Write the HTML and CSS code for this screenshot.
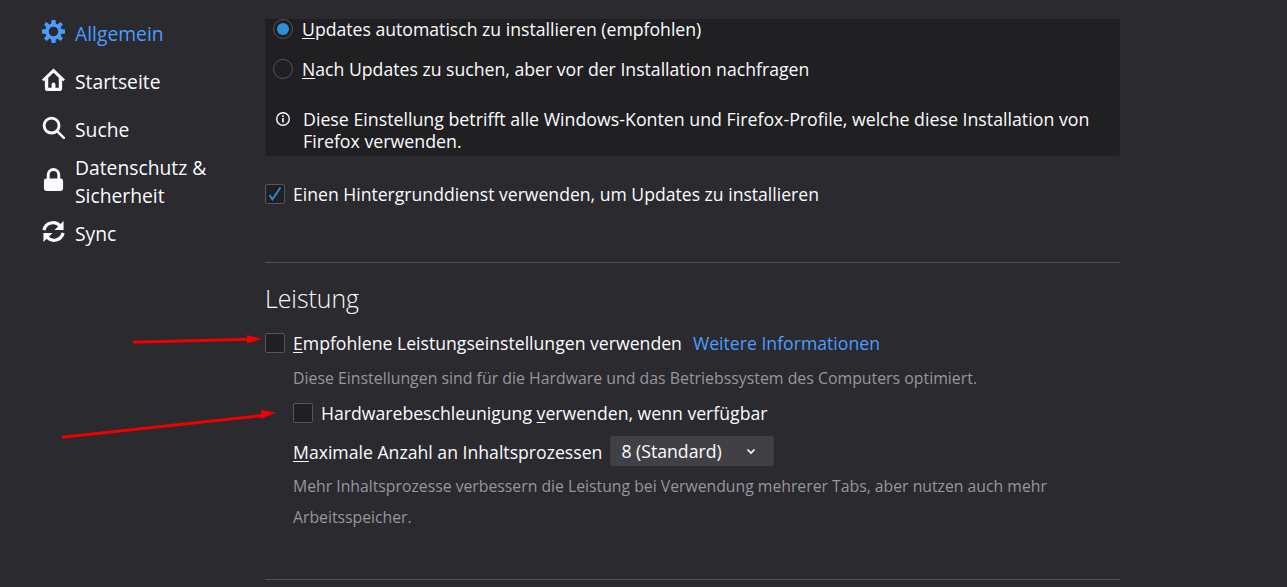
FILE: index.html
```html
<!DOCTYPE html>
<html lang="de">
<head>
<meta charset="utf-8">
<title>Einstellungen</title>
<link rel="stylesheet" href="styles.css">
</head>
<body>
<nav class="sidebar">
  <a class="nav-item active">
    <svg class="nav-icon" viewBox="0 0 24 24"><path fill="currentColor" fill-rule="evenodd" d="M10 0h4l.6 4 1.500.6L19.400 2.200l2.400 2.400-2.400 3.300.6 1.500 4 .6v4l-4 .6-.6 1.500 2.400 3.300-2.400 2.400-3.300-2.400-1.500.6-.6 4h-4l-.6-4-1.500-.6-3.300 2.400-2.400-2.400 2.400-3.300-.6-1.500-4-.6v-4l4-.6.6-1.500-2.400-3.300 2.400-2.400 3.300 2.400 1.500-.6zM12 7a5 5 0 1 0 0 10 5 5 0 0 0 0-10z"/></svg>
    <span>Allgemein</span>
  </a>
  <a class="nav-item">
    <svg class="nav-icon" viewBox="0 0 24 24"><path fill="currentColor" fill-rule="evenodd" d="M12 0.500 24 12l-1.800 1.900-1.200-1.100V21a3 3 0 0 1-3 3H6a3 3 0 0 1-3-3v-8.200l-1.200 1.100L0 12zM12 5 6.500 10.300V20.500H10V17a2 2 0 0 1 4 0v3.500H17.500V10.300z"/></svg>
    <span>Startseite</span>
  </a>
  <a class="nav-item">
    <svg class="nav-icon" viewBox="0 0 24 24"><circle cx="10" cy="10" r="7.800" fill="none" stroke="currentColor" stroke-width="3"/><path d="M15.500 15.500 22.800 22.800" stroke="currentColor" stroke-width="2.600" stroke-linecap="round"/></svg>
    <span>Suche</span>
  </a>
  <a class="nav-item two-line">
    <svg class="nav-icon" viewBox="0 0 24 24"><path fill="currentColor" fill-rule="evenodd" d="M12 0a7 7 0 0 1 7 7v4h.5A2.500 2.500 0 0 1 22 13.500v8a2.500 2.500 0 0 1-2.500 2.500h-15A2.500 2.500 0 0 1 2 21.500v-8A2.500 2.500 0 0 1 4.500 11H5V7a7 7 0 0 1 7-7zm0 3a4 4 0 0 0-4 4v4h8V7a4 4 0 0 0-4-4z"/></svg>
    <span>Datenschutz &amp; Sicherheit</span>
  </a>
  <a class="nav-item">
    <svg class="nav-icon" viewBox="0 0 24 24"><path fill="none" stroke="currentColor" stroke-width="3.400" d="M2 10.500A9.700 9.700 0 0 1 19 6.500M22 13.500A9.700 9.700 0 0 1 5 17.500"/><path fill="currentColor" d="M22.500 1v9.500h-9.500zM1.500 23v-9.500h9.500z"/></svg>
    <span>Sync</span>
  </a>
</nav>

<main class="content">
  <section class="update-box">
    <label class="radio-row first">
      <span class="radio checked"></span>
      <span><u>U</u>pdates automatisch zu installieren (empfohlen)</span>
    </label>
    <label class="radio-row">
      <span class="radio"></span>
      <span><u>N</u>ach Updates zu suchen, aber vor der Installation nachfragen</span>
    </label>
    <div class="notice">
      <svg class="info-icon" viewBox="0 0 16 16"><circle cx="8" cy="8" r="6.300" fill="none" stroke="currentColor" stroke-width="1.400"/><rect x="7.200" y="7" width="1.600" height="4.500" fill="currentColor"/><rect x="7.200" y="4.300" width="1.600" height="1.700" fill="currentColor"/></svg>
      <p>Diese Einstellung betrifft alle Windows-Konten und Firefox-Profile, welche diese Installation von Firefox verwenden.</p>
    </div>
  </section>

  <label class="check-row service">
    <span class="checkbox checked"><svg viewBox="0 0 20 20"><path d="M3.900 11.100 7.200 16.100 16.100 2.800" fill="none" stroke="currentColor" stroke-width="2"/></svg></span>
    <span>Einen Hinter<u>g</u>runddienst verwenden, um Updates zu installieren</span>
  </label>

  <hr class="rule">

  <h2 class="heading">Leistung</h2>

  <div class="check-row recommended">
    <span class="checkbox"></span>
    <span><u>E</u>mpfohlene Leistungseinstellungen verwenden</span>
    <a class="link">Weitere Informationen</a>
  </div>

  <div class="indent">
    <p class="hint first-hint">Diese Einstellungen sind für die Hardware und das Betriebssystem des Computers optimiert.</p>
    <label class="check-row hardware">
      <span class="checkbox"></span>
      <span>Hardwarebeschleunigung <u>v</u>erwenden, wenn verfügbar</span>
    </label>
    <div class="process-row">
      <span class="process-label"><u>M</u>aximale Anzahl an Inhaltsprozessen</span>
      <span class="select">
        <span>8 (Standard)</span>
        <svg viewBox="0 0 10 10"><path d="M1.500 3.500 5 7 8.500 3.500" fill="none" stroke="currentColor" stroke-width="1.700"/></svg>
      </span>
    </div>
    <p class="hint process-hint">Mehr Inhaltsprozesse verbessern die Leistung bei Verwendung mehrerer Tabs, aber nutzen auch mehr Arbeitsspeicher.</p>
  </div>

  <hr class="rule bottom">
</main>

<svg class="arrows" viewBox="0 0 1287 587">
  <path d="M133 342.300 250 339.200" stroke="#f00000" stroke-width="3" fill="none"/>
  <path d="M262 339 247 335V343.500z" fill="#f00000"/>
  <path d="M62 437.300 264 415.500" stroke="#f00000" stroke-width="3" fill="none"/>
  <path d="M276 412.500 261 410V419z" fill="#f00000"/>
</svg>
</body>
</html>
```
FILE: styles.css
```css
* { box-sizing: border-box; }
html, body { height: 100%; }
body {
  margin: 0;
  height: 587px;
  overflow: hidden;
  display: flex;
  background: #2a2a2f;
  color: #fbfbfe;
  font-family: "Open Sans", "Noto Sans", sans-serif;
  font-size: 17.65px;
  line-height: 22px;
  position: relative;
}
u { text-underline-offset: 2px; text-decoration-thickness: 1px; }
p { margin: 0; }

.sidebar { width: 265px; flex: none; padding: 10px 0 0 42px; display: flex; flex-direction: column; font-size: 19.3px; }
.nav-item { display: flex; align-items: center; gap: 10px; height: 48px; line-height: 28px; width: 175px; }
.nav-item.active { color: #4a9dff; }
.nav-item.two-line { height: 56px; }
.nav-icon { width: 23px; height: 23px; flex: none; margin-bottom: 5px; }

.content { width: 855px; flex: none; padding-top: 19px; display: flex; flex-direction: column; }

.update-box { height: 137px; background: #202023; border-radius: 0 0 4px 4px; display: flex; flex-direction: column; padding: 0 8px; }
.radio-row { display: flex; align-items: center; gap: 9px; height: 22px; margin-bottom: 18px; }
.radio-row.first { margin-top: -1px; }
.radio { width: 20px; height: 20px; border-radius: 50%; border: 1px solid #55555a; background: #202023; flex: none; display: flex; align-items: center; justify-content: center; }
.radio.checked::before { content: ""; width: 12px; height: 12px; border-radius: 50%; background: #2a90d9; }
.notice { display: flex; gap: 12px; margin-top: 11px; align-items: flex-start; }
.notice p { font-size: 17.78px; line-height: 21.5px; flex: 1; margin-right: 20px; }
.info-icon { width: 16px; height: 16px; flex: none; margin: 2px 0 0 2px; }

.check-row { display: flex; align-items: center; gap: 8px; }
.checkbox { width: 20px; height: 20px; border: 1px solid #55555a; border-radius: 2px; background: #202023; flex: none; color: #2a90d9; display: block; }
.checkbox svg { display: block; width: 18px; height: 18px; }
.service { margin-top: 27px; font-size: 17.6px; }

.rule { border: 0; border-top: 1px solid #515156; margin: 57px 0 0; width: 100%; }
.rule.bottom { margin-top: 46px; }
.heading { font-weight: 300; font-size: 24.8px; line-height: 32px; margin: 19px 0 0; color: #fbfbfe; }

.recommended { margin-top: 18px; }
.link { color: #4a9dff; margin-left: 3px; }
.indent { padding-left: 28px; }
.hint { color: #97979c; font-size: 15.87px; }
.first-hint { margin-top: 13px; }
.hardware { margin-top: 13px; }
.process-row { display: flex; align-items: center; gap: 8px; margin-top: 12px; }
.process-label { padding-top: 2px; }
.select { width: 164px; height: 30px; background: #414145; border-radius: 3px; display: flex; align-items: center; justify-content: space-between; padding: 0 18px 0 11px; }
.select svg { width: 10px; height: 10px; }
.process-hint { font-size: 15.78px; line-height: 31px; margin-top: 5px; }

.arrows { position: absolute; left: 0; top: 0; width: 1287px; height: 587px; pointer-events: none; }
```
